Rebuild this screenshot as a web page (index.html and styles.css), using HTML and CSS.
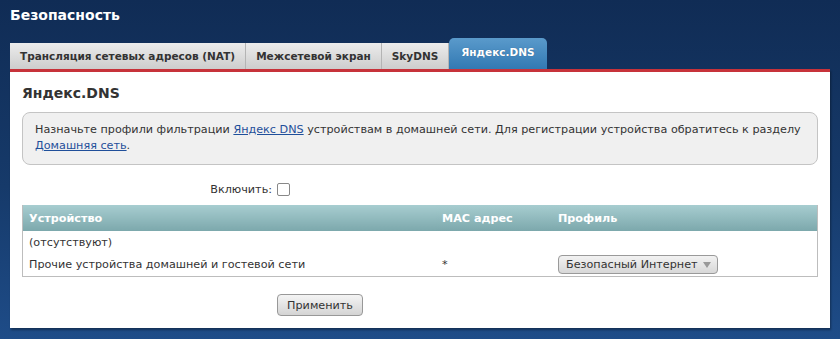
FILE: index.html
```html
<!DOCTYPE html>
<html lang="ru">
<head>
<meta charset="utf-8">
<title>Безопасность</title>
<link rel="stylesheet" href="styles.css">
</head>
<body>
<div class="page">
  <h1 class="page-title">Безопасность</h1>
  <div class="tabs">
    <div class="tab">Трансляция сетевых адресов (NAT)</div>
    <div class="tab">Межсетевой экран</div>
    <div class="tab">SkyDNS</div>
    <div class="tab active">Яндекс.DNS</div>
  </div>
  <div class="panel">
    <h2 class="panel-title">Яндекс.DNS</h2>
    <div class="info">
      Назначьте профили фильтрации <a href="#">Яндекс DNS</a> устройствам в домашней сети. Для регистрации устройства обратитесь к разделу <a href="#">Домашняя сеть</a>.
    </div>
    <div class="form-row">
      <label class="form-label" for="en">Включить:</label>
      <span class="checkbox" id="en"></span>
    </div>
    <table class="grid">
      <thead>
        <tr><th class="c1">Устройство</th><th class="c2">MAC адрес</th><th class="c3">Профиль</th></tr>
      </thead>
      <tbody>
        <tr class="r1"><td>(отсутствуют)</td><td></td><td></td></tr>
        <tr class="r2"><td>Прочие устройства домашней и гостевой сети</td><td>*</td><td><span class="select">Безопасный Интернет<span class="arrow"></span></span></td></tr>
      </tbody>
    </table>
    <div class="form-row buttons">
      <span class="form-label"></span>
      <button class="btn">Применить</button>
    </div>
  </div>
</div>
</body>
</html>
```

FILE: styles.css
```css
html, body {
  margin: 0;
  padding: 0;
}
body {
  width: 840px;
  height: 339px;
  overflow: hidden;
  background: linear-gradient(#102c55 0%, #163a6a 55%, #1e4c88 100%);
  font-family: "DejaVu Sans", Verdana, sans-serif;
  font-size: 11.2px;
  color: #333;
}
.page {
  padding: 0 10px;
}
.page-title {
  margin: 0;
  padding-top: 7px;
  height: 31px;
  box-sizing: border-box;
  font-size: 14px;
  font-weight: bold;
  color: #fff;
}
.tabs {
  display: flex;
  align-items: flex-end;
  height: 38px;
  box-sizing: border-box;
}
.tab {
  height: 26px;
  line-height: 26px;
  padding: 0 10px;
  box-sizing: border-box;
  font-weight: bold;
  font-size: 10.5px;
  color: #333;
  background: linear-gradient(#ececec, #cdcdcd);
  border-right: 1px solid #b4b4b4;
}
.tab.active {
  height: 31px;
  line-height: 29px;
  padding: 0 12px;
  color: #fff;
  border-right: none;
  border-radius: 5px 5px 0 0;
  background: linear-gradient(#5a9acb, #3279b3);
  text-shadow: 0 0 1px rgba(0,0,0,0.3);
}
.panel {
  background: #fff;
  border-top: 3px solid #c7323a;
  padding: 12px 12px 0;
  height: 259px;
  box-sizing: border-box;
  box-shadow: 1px 2px 2px rgba(0,0,0,0.35);
}
.panel-title {
  margin: 0 0 10px;
  font-size: 14px;
  font-weight: bold;
  color: #333;
  height: 18px;
  line-height: 18px;
}
.info {
  background: #f0f0f0;
  border: 1px solid #c4c4c4;
  border-radius: 8px;
  padding: 9px 12px 10px;
  line-height: 16px;
  color: #333;
}
.info a {
  color: #1f4f9a;
  text-decoration: underline;
}
.form-row {
  display: flex;
  align-items: center;
  height: 40px;
  padding-top: 9px;
  box-sizing: border-box;
}
.form-label {
  width: 255px;
  text-align: right;
  padding-right: 5px;
  box-sizing: border-box;
}
.checkbox {
  width: 11px;
  height: 11px;
  border: 1px solid #888;
  border-radius: 2px;
  background: #fff;
}
.grid {
  width: 100%;
  border-collapse: collapse;
  border: 1px solid #bdbdbd;
  border-top: none;
}
.grid th {
  height: 26px;
  padding: 0 6px;
  text-align: left;
  color: #fff;
  font-weight: bold;
  background: linear-gradient(#a7cdd0, #7ca8ac);
}
.grid th.c1 { width: 401px; }
.grid th.c2 { width: 104px; }
.grid td {
  padding: 0 6px;
  height: 22px;
}
.grid tr.r2 td {
  height: 23px;
}
.select {
  display: inline-flex;
  align-items: center;
  height: 19px;
  padding: 0 6px 0 7px;
  border: 1px solid #9a9a9a;
  border-radius: 4px;
  background: linear-gradient(#f2f2f2, #d8d8d8);
  color: #333;
  box-sizing: border-box;
  width: 160px;
}
.arrow {
  margin-left: auto;
  width: 0;
  height: 0;
  border-left: 4px solid transparent;
  border-right: 4px solid transparent;
  border-top: 6px solid #999;
}
.buttons {
  height: auto;
  padding-top: 17px;
  align-items: flex-start;
}
.btn {
  font-family: "DejaVu Sans", Verdana, sans-serif;
  font-size: 11.2px;
  color: #333;
  width: 86px;
  height: 22px;
  padding: 0;
  border: 1px solid #989898;
  border-radius: 4px;
  background: linear-gradient(#f4f4f4, #d4d4d4);
}
```
